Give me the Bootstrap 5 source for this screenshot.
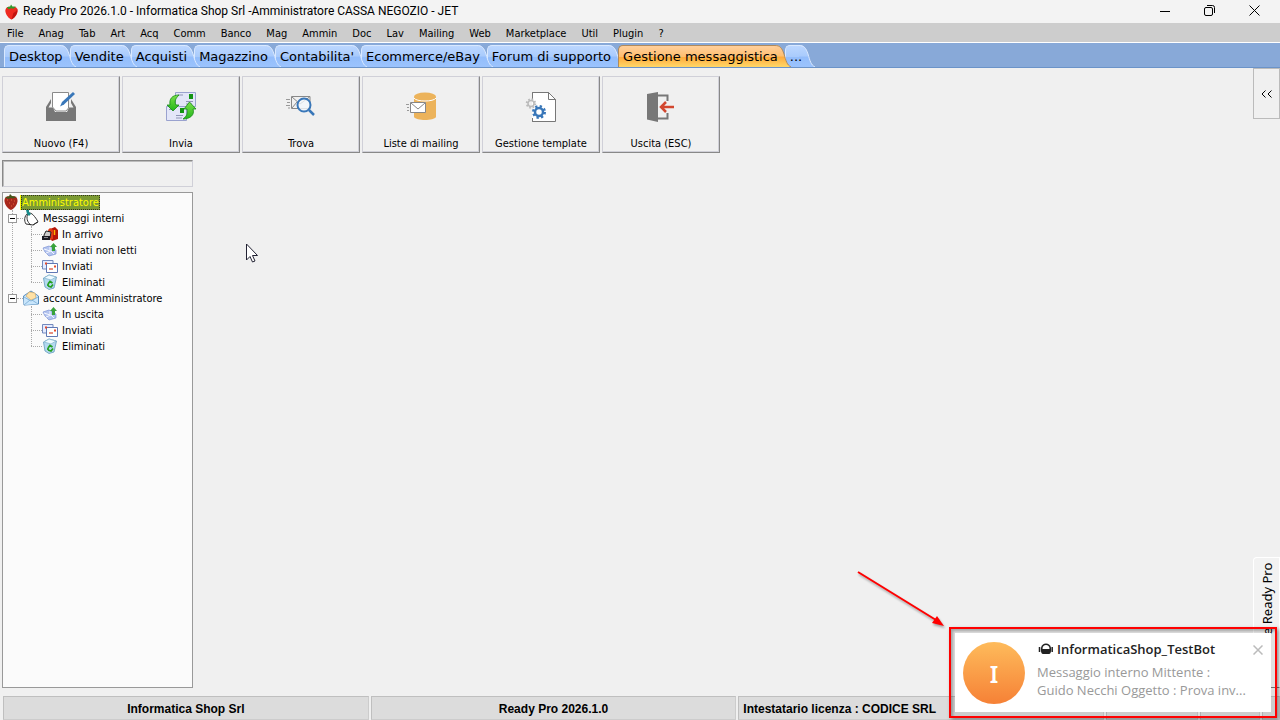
<!DOCTYPE html>
<html lang="it">
<head>
<meta charset="utf-8">
<meta name="viewport" content="width=device-width, initial-scale=1">
<title>Ready Pro 2026.1.0</title>
<link href="https://cdn.jsdelivr.net/npm/bootstrap@5.3.0/dist/css/bootstrap.min.css" rel="stylesheet">
<style>
:root { --ui: "DejaVu Sans Condensed", "DejaVu Sans", sans-serif; --humanist: "Open Sans", "Noto Sans", sans-serif; }
body { background: #f0f0f0; color: #000; font: 11px/16px var(--ui); }
button, input { font: inherit; color: inherit; border-radius: 0; }
svg { display: block; flex: none; }

.title-bar { height: 23px; padding-right: 3px; background: #f3f3f3; font: 12px/23px Roboto, "Noto Sans", sans-serif; }
.title-bar .win-btn { width: 45px; height: 21px; background: none; border: 0; display: grid; place-items: center; }
.menu-bar { height: 20px; padding-left: 7px; gap: 15px; background: #cdcdcd; border-bottom: 1px solid #fff; line-height: 21px; }
.menu-bar a { color: #000; text-decoration: none; }

.tab-strip { height: 25px; padding: 2px 0 0 4px; background: #88a9d8; border-bottom: 1px solid #6b93c8; isolation: isolate; }
.tab-btn { position: relative; z-index: var(--z); height: 22px; padding: 0 7px 0 5px; border: 0; background: none; font: 13px/24px "DejaVu Sans", sans-serif; white-space: nowrap; }
.tab-btn::before { content: ""; position: absolute; inset: 0 10px 0 0; z-index: -1; border: solid #d8e8ff; border-width: 1px 0 0 1px; border-radius: 5px 0 0 0; background: linear-gradient(#bcd7ff, #a9cbfc 50%, #93bdfb 55%, #9bc3fd); }
.tab-btn svg { position: absolute; top: 0; right: -6px; z-index: -1; }
.tab-btn.current::before { border-color: #b08a5c; background: linear-gradient(#ffcf9c, #ffbf70 50%, #ffab3c 55%, #ffd768); }

.tool-row { padding: 8px 0 7px 2px; gap: 2px; }
.tool-btn { width: 118px; height: 77px; padding: 13px 0 0; background: #f0f0f0; border: 1px solid; border-color: #d0d0d8 #888 #888 #d0d0d8; box-shadow: inset -1px -1px #d0d0d8; display: flex; flex-direction: column; align-items: center; }
.tool-btn span { margin-top: 12px; line-height: 16px; }
.side-pane { width: 191px; margin-left: 2px; gap: 5px; }
.find-box { height: 27px; width: 100%; background: #f0f0f0; border: 1px solid; border-color: #888 #d0d0d8 #d0d0d8 #888; box-shadow: inset 1px 1px #bbb; }
.tree-box { background: #fbfbfb; border: 1px solid #999; padding-top: 1px; }
.tree-box ul { list-style: none; margin: 0; padding: 0; }
.tree-row { height: 16px; display: flex; align-items: center; white-space: nowrap; }
.tree-row a { color: #000; text-decoration: none; padding: 0 2px; line-height: 15px; }
.tree-row a.picked { color: #ff0; background: #7b9a33; outline: 1px dotted #332; outline-offset: -1px; margin-left: 2px; padding: 0 1px; box-shadow: -1px 0 #ff0; }
.tree-row svg { width: 16px; height: 16px; }
.branch { position: relative; }
.branch::before { content: ""; position: absolute; left: 9px; top: 0; bottom: 56px; border-left: 1px dotted #aaa; }
.branch > li > .tree-row { padding-left: 5px; }
.branch > li > .tree-row a { padding-left: 4px; }
.fold-btn { position: relative; width: 9px; height: 9px; padding: 0; border: 1px solid #999; background: #fff; }
.fold-btn::after { content: ""; position: absolute; left: 1px; top: 3px; width: 5px; height: 1px; background: #000; }
.twig { width: 6px; border-top: 1px dotted #aaa; }
.tree-box .leafs { margin-left: 28px; position: relative; }
.leafs::before { content: ""; position: absolute; left: 0; top: 0; bottom: 8px; border-left: 1px dotted #aaa; }
.leafs .twig { width: 11px; }
.leafs .tree-row a { padding-left: 4px; }

.rail { width: 27px; }
.rail-toggle { height: 51px; width: 27px; padding: 0; background: #f0f0f0; border: 1px solid #bbb; display: grid; place-items: center; }
.rail-tab { width: 27px; height: 131px; padding: 0; background: #f2f2f2; border: 1px solid #fff; border-bottom-color: #777; border-radius: 4px 0 0 0; writing-mode: vertical-rl; font: 13px/20px "Noto Sans", sans-serif; }
.rail-tab span { display: block; transform: rotate(180deg); padding: 5px 0; height: 100%; text-align: right; }

.status-row { display: grid; grid-template-columns: 1fr 1fr 1fr 92px 60px 18px; gap: 2px; padding-left: 3px; height: 24px; font: bold 12px/24px "Liberation Sans", Arial, sans-serif; }
.status-row > div { background: #dcdcdc; border: 1px solid #bfbfbf; border-bottom-color: #ccc; border-right-color: #ccc; text-align: center; white-space: nowrap; overflow: hidden; }

.toast-frame { position: fixed; right: 3px; bottom: 2px; width: 328px; height: 91px; border: 2px solid #f00; padding: 4px; background: #00000012; box-shadow: 2px 2px 4px #0006, inset 2px 2px 3px #0004; z-index: 5; }
.toast-body-box { height: 100%; background: #fff; padding: 9px 8px; font: 13px/18px var(--humanist); color: #999; }
.avatar { width: 62px; height: 62px; border-radius: 50%; background: linear-gradient(#febb5b, #f68136); color: #fff; font: 600 23px/64px "Noto Sans", sans-serif; text-align: center; }
.toast-title { color: #222; font-weight: 600; line-height: 14px; margin-bottom: 7px; }
.toast-x { border: 0; background: none; padding: 3px 0 0; height: 13px; }
.pointer-mark { position: fixed; left: 246px; top: 243px; }
.arrow-mark { position: fixed; right: 328px; bottom: 86px; z-index: 4; filter: drop-shadow(1px 2px 1px #0005); }
</style>
</head>
<body class="d-flex flex-column min-vh-100 overflow-hidden">

<svg width="0" height="0" class="position-absolute" aria-hidden="true">
  <defs>
    <linearGradient id="gBlue" x2="0" y2="1"><stop stop-color="#bcd7ff"/><stop offset=".5" stop-color="#a9cbfc"/><stop offset=".55" stop-color="#93bdfb"/><stop offset="1" stop-color="#9bc3fd"/></linearGradient>
    <linearGradient id="gOrange" x2="0" y2="1"><stop stop-color="#ffcf9c"/><stop offset=".5" stop-color="#ffbf70"/><stop offset=".55" stop-color="#ffab3c"/><stop offset="1" stop-color="#ffd768"/></linearGradient>
    <linearGradient id="gGreen" x2="0" y2="1"><stop stop-color="#7be04a"/><stop offset="1" stop-color="#22b51c"/></linearGradient>
    <symbol id="cap" viewBox="0 0 16 22"><path d="M0 0C5 0 7 3 9 9C11 16 12 20 16 22H0Z" fill="url(#gBlue)"/><path d="M0 .5C5 .5 7 3 9 9C11 16 12 20 16 22" fill="none" stroke="#dceaff"/></symbol>
    <symbol id="capOn" viewBox="0 0 16 22"><path d="M0 0C5 0 7 3 9 9C11 16 12 20 16 22H0Z" fill="url(#gOrange)"/><path d="M0 .5C5 .5 7 3 9 9C11 16 12 20 16 22" fill="none" stroke="#b08a5c"/></symbol>
    <symbol id="berry" viewBox="0 0 16 16"><path d="M8 3C4 1 1 4 1.500 7.500C2 11 5 15 8 16C11 15 14 11 14.500 7.500C15 4 12 1 8 3Z" fill="#ee2a20"/><path d="M10 9c3-1 4-3 4-5c1 4-1 9-6 12z" fill="#c01410"/><path d="M3 3L6.500 2L7.500 0L9 2L13 2.500L10 4.500L8 4L5 5Z" fill="#2f9a2b"/></symbol>
    <symbol id="berryDark" viewBox="0 0 16 16"><path d="M8 3C4 1 1 4 1.500 7.500C2 11 5 15 8 16C11 15 14 11 14.500 7.500C15 4 12 1 8 3Z" fill="#a8281c"/><path d="M4 6h1M8 6h1M11 7h1M6 9h1M10 10h1M8 12h1" stroke="#e5603a"/><path d="M2 3L6 2.500L7 0L9 2L14 3L10 4.500L8 4L5 5Z" fill="#44581c"/></symbol>
    <symbol id="note" viewBox="0 0 16 16"><path d="M5 3C9 2 12 7 15 11.500L10 15L3 14C1 11 1 6 5 3Z" fill="#fff" stroke="#333"/><path d="M5 3C3 8 4 12 8 15M10 15L15 12" stroke="#333" fill="none"/><path d="M3 0H6V2L8 4L6 6L4 4Z" fill="#168a8a"/></symbol>
    <symbol id="inbox" viewBox="0 0 16 16"><path d="M8 3L13 1L16 4V13L10 15L8 12Z" fill="#b61508"/><path d="M12.500 4V9" stroke="#ffb400" stroke-width="1.500"/><path d="M6 4l2-2 3 2v9l-3 1z" fill="#e23a17"/><path d="M2 9L4 5L9 6L8 12L2 13Z" fill="#ccc" stroke="#222"/><path d="M0 10H8V14H0Z" fill="#1b1b22"/><path d="M2 11.500H6" stroke="#8a8a90"/></symbol>
    <symbol id="outbox" viewBox="0 0 16 16"><path d="M1 6L7 4L14 8L14 12L7 14L3 10Z" fill="#b4c4ef" stroke="#7d93d4" stroke-width=".7"/><path d="M2 7L8 9L8 5M4 11L9 9L12 12" fill="none" stroke="#f4f7ff"/><path d="M10 9V5H8L11.500 1L15 5H13V9Z" fill="#39a23b"/></symbol>
    <symbol id="sent" viewBox="0 0 16 16"><path d="M.5 2.500H11V11H.5Z" fill="#e4ebff" stroke="#7389bd"/><path d="M4.500 5.500H15.500V14.500H4.500Z" fill="#fff" stroke="#6078b4"/><path d="M3 5.500H5M12 8.500H14" stroke="#e54b2b" stroke-width="2"/><path d="M7 11H11" stroke="#df6a55" stroke-width="1.500"/></symbol>
    <symbol id="bin" viewBox="0 0 16 16"><path d="M1.500 4L7 1L14.500 3L12 14L7 15.500L3 13Z" fill="#b4d9ef" stroke="#629abc" stroke-width=".8"/><path d="M2 4L9 6L14 3L7 1Z" fill="#eefaff" stroke="#8bb8d0" stroke-width=".8"/><path d="M6 10L8 7.500L10.500 9M11 10.500L9 13L6 12M6 12V10" stroke="#25a020" stroke-width="1.800" fill="none"/></symbol>
    <symbol id="openMail" viewBox="0 0 16 16"><path d="M.5 6L8 1L15.500 6V14L1 15Z" fill="#c8e5fb" stroke="#5b8fbd"/><path d="M3 6L6 2L12 3L13 8L8 10Z" fill="#ffe1a5" stroke="#d0a45c" stroke-width=".6"/><path d="M1 7L8 11L15 7V14L1 15Z" fill="#c8e5fb"/><path d="M1 7L8 11L15 7M1 15L7 10M15 14L9 10" fill="none" stroke="#76a9d2" stroke-width=".8"/></symbol>
  </defs>
</svg>

<header>
  <div class="title-bar d-flex">
    <svg class="mt-1 ms-1 me-1" width="15" height="16"><use href="#berry"/></svg>
    <span class="flex-grow-1 text-nowrap">Ready Pro 2026.1.0 - Informatica Shop Srl -Amministratore CASSA NEGOZIO - JET</span>
    <button class="win-btn" aria-label="Riduci"><svg width="10" height="10"><path d="M0 5.500H10" stroke="#000"/></svg></button>
    <button class="win-btn" aria-label="Ripristina"><svg width="11" height="11" fill="none" stroke="#000"><rect x=".5" y="2.500" width="8" height="8" rx="1.500"/><path d="M3 .5H8.500A2 2 0 0 1 10.500 2.500V8"/></svg></button>
    <button class="win-btn" aria-label="Chiudi"><svg width="11" height="11"><path d="M.5 .5L10.500 10.500M10.500 .5L.5 10.500" stroke="#000"/></svg></button>
  </div>
  <nav class="menu-bar d-flex" aria-label="Menu">
    <a href="#">File</a><a href="#">Anag</a><a href="#">Tab</a><a href="#">Art</a><a href="#">Acq</a><a href="#">Comm</a><a href="#">Banco</a><a href="#">Mag</a><a href="#">Ammin</a><a href="#">Doc</a><a href="#">Lav</a><a href="#">Mailing</a><a href="#">Web</a><a href="#">Marketplace</a><a href="#">Util</a><a href="#">Plugin</a><a href="#">?</a>
  </nav>
  <div class="tab-strip d-flex">
    <button class="tab-btn" style="--z:8">Desktop<svg width="16" height="22"><use href="#cap"/></svg></button>
    <button class="tab-btn" style="--z:7">Vendite<svg width="16" height="22"><use href="#cap"/></svg></button>
    <button class="tab-btn" style="--z:6">Acquisti<svg width="16" height="22"><use href="#cap"/></svg></button>
    <button class="tab-btn" style="--z:5">Magazzino<svg width="16" height="22"><use href="#cap"/></svg></button>
    <button class="tab-btn" style="--z:4">Contabilita'<svg width="16" height="22"><use href="#cap"/></svg></button>
    <button class="tab-btn" style="--z:3">Ecommerce/eBay<svg width="16" height="22"><use href="#cap"/></svg></button>
    <button class="tab-btn" style="--z:2">Forum di supporto<svg width="16" height="22"><use href="#cap"/></svg></button>
    <button class="tab-btn current" style="--z:9">Gestione messaggistica<svg width="16" height="22"><use href="#capOn"/></svg></button>
    <button class="tab-btn" style="--z:1">...<svg width="16" height="22"><use href="#cap"/></svg></button>
  </div>
</header>

<main class="d-flex flex-grow-1">
  <div class="d-flex flex-column flex-grow-1">
    <div class="tool-row d-flex">
      <button class="tool-btn"><svg width="34" height="34"><path d="M2 17L7 9V13L4.500 17.500H9L11 22H23L25 17.500H29.500L27 13V9L32 17V31H2Z" fill="#777"/><path d="M8.500 2.500H24.500V18L22 21H12L8.500 17Z" fill="#fff" stroke="#8a8a8a"/><path d="M16 16.500L18 12L29 2L31 4L20 14.500Z" fill="#3977b9"/></svg><span>Nuovo (F4)</span></button>
      <button class="tool-btn"><svg width="34" height="34"><path d="M11.500 2.500H31.500V16.500H11.500Z" fill="#e3e6f8" stroke="#9aa2cf"/><path d="M2.500 16.500H22.500V30.500H2.500Z" fill="#e3e6f8" stroke="#9aa2cf"/><path d="M25 4h4v5h-4zM16 18h4v5h-4z" fill="#139413"/><path d="M14 5h5M22 11.500h7M22 14h6M5 19.500h4M12 25.500h7M12 28h6" stroke="#8f96b5"/><path d="M15 5C8 5 5 9 6 15H3L9 21L15 15H12C10 11 12 8 15 5Z" fill="url(#gGreen)" stroke="#178a14" stroke-width=".8"/><path d="M19 29C26 29 31 25 29 19H32L25.500 12L20 19H23C24 23 23 26 19 29Z" fill="url(#gGreen)" stroke="#178a14" stroke-width=".8"/></svg><span>Invia</span></button>
      <button class="tool-btn"><svg width="34" height="34" fill="none"><path d="M7.500 6.500H26V18.500H7.500ZM8 7L16 14L25.500 7M8 18L13 12" stroke="#888"/><path d="M2 9.500H6M3 12.500H6M2 15.500H6M4 18H6" stroke="#999"/><circle cx="20" cy="15" r="6.500" fill="#f4f8fc" fill-opacity=".8" stroke="#3977b9" stroke-width="2"/><path d="M25 20L30 25" stroke="#3977b9" stroke-width="2.500"/></svg><span>Trova</span></button>
      <button class="tool-btn"><svg width="34" height="34" fill="none"><path d="M10 7V27C12 31 30 31 32 27V7Z" fill="#ecb35b"/><ellipse cx="21" cy="6.500" rx="11" ry="4" fill="#ecb35b"/><path d="M10 8C12 12 30 12 32 8" stroke="#fff"/><path d="M6.500 12.500H21.500V22.500H6.500Z" fill="#fff" stroke="#888"/><path d="M7 13L14 19L21 13" stroke="#888"/><path d="M2 14.500H5M3 17.500H5M3 20.500H5" stroke="#999"/></svg><span>Liste di mailing</span></button>
      <button class="tool-btn"><svg width="34" height="34" fill="none"><path d="M8.500 10V2.500H24.500L31.500 9.500V31.500H8.500V28" fill="#fff" stroke="#777"/><path d="M8 3H12V28H8Z" fill="#fff"/><path d="M8.500 9V2.500H24.500V9.500H31.500L24.500 2.500M8.500 28V31.500H31" stroke="#777"/><circle cx="7" cy="13.500" r="4" stroke="#bbb" stroke-width="2.500" stroke-dasharray="1.570 1.570"/><circle cx="7" cy="13.500" r="3" stroke="#bbb" stroke-width="1.500"/><circle cx="15" cy="22" r="5.500" stroke="#3977b9" stroke-width="3" stroke-dasharray="2.160 2.160"/><circle cx="15" cy="22" r="4" fill="#fff" stroke="#3977b9" stroke-width="2.500"/></svg><span>Gestione template</span></button>
      <button class="tool-btn"><svg width="34" height="34" fill="none"><path d="M3 4L14 2V32L3 29.500Z" fill="#777"/><path d="M14 5.500H23.500V11M23.500 23V28.500H14" stroke="#777" stroke-width="2"/><path d="M17 17H30M22 12L17 17L22 22" stroke="#d2472f" stroke-width="2.500"/></svg><span>Uscita (ESC)</span></button>
    </div>
    <div class="side-pane d-flex flex-column flex-grow-1">
      <input class="find-box" type="text" aria-label="Cerca">
      <nav class="tree-box flex-grow-1" aria-label="Cartelle">
        <div class="tree-row"><svg><use href="#berryDark"/></svg><a class="picked" href="#">Amministratore</a></div>
        <ul class="branch">
          <li>
            <div class="tree-row"><button class="fold-btn" aria-label="Comprimi Messaggi interni"></button><i class="twig"></i><svg><use href="#note"/></svg><a href="#">Messaggi interni</a></div>
            <ul class="leafs">
              <li class="tree-row"><i class="twig"></i><svg><use href="#inbox"/></svg><a href="#">In arrivo</a></li>
              <li class="tree-row"><i class="twig"></i><svg><use href="#outbox"/></svg><a href="#">Inviati non letti</a></li>
              <li class="tree-row"><i class="twig"></i><svg><use href="#sent"/></svg><a href="#">Inviati</a></li>
              <li class="tree-row"><i class="twig"></i><svg><use href="#bin"/></svg><a href="#">Eliminati</a></li>
            </ul>
          </li>
          <li>
            <div class="tree-row"><button class="fold-btn" aria-label="Comprimi account Amministratore"></button><i class="twig"></i><svg><use href="#openMail"/></svg><a href="#">account Amministratore</a></div>
            <ul class="leafs">
              <li class="tree-row"><i class="twig"></i><svg><use href="#outbox"/></svg><a href="#">In uscita</a></li>
              <li class="tree-row"><i class="twig"></i><svg><use href="#sent"/></svg><a href="#">Inviati</a></li>
              <li class="tree-row"><i class="twig"></i><svg><use href="#bin"/></svg><a href="#">Eliminati</a></li>
            </ul>
          </li>
        </ul>
      </nav>
    </div>
  </div>
  <aside class="rail d-flex flex-column justify-content-between">
    <button class="rail-toggle" aria-label="Espandi pannello"><svg width="11" height="8" fill="none" stroke="#000"><path d="M4.500 .5L1 4L4.500 7.500M10.500 .5L7 4L10.500 7.500"/></svg></button>
    <button class="rail-tab"><span>e Ready Pro</span></button>
  </aside>
</main>

<footer class="status-row mt-2">
  <div>Informatica Shop Srl</div><div>Ready Pro 2026.1.0</div><div class="text-start ps-1">Intestatario licenza : CODICE SRL</div><div></div><div></div><div></div>
</footer>

<svg class="pointer-mark" width="12" height="20" aria-hidden="true"><path d="M.5 1V17L4 13.500L6.500 19L9 18L6.500 12.500H11.500Z" fill="#fff" stroke="#223"/></svg>
<svg class="arrow-mark" width="96" height="64" aria-hidden="true"><path d="M2 2L80 50" stroke="#f00" stroke-width="2"/><path d="M88 56L81 46L76 53Z" fill="#f00"/></svg>

<section class="toast-frame" role="alert">
  <div class="toast-body-box d-flex align-items-start">
    <div class="avatar flex-shrink-0">I</div>
    <div class="ms-2 ps-1 flex-grow-1 text-nowrap">
      <div class="toast-title d-flex align-items-center"><svg class="me-1" width="16" height="14"><path d="M4.500 11C3 7 4 1.500 9 1.500C14 1.500 15 7 13.500 11Q13 12 12 12H6Q5 12 4.500 11Z" fill="#222"/><path d="M5.500 7C5.500 4 7 3 9 3C11 3 12.500 4 12.500 7Z" fill="#fff"/><path d="M2.500 5V10M15.200 5V10" stroke="#222" stroke-width="1.500"/></svg>InformaticaShop_TestBot</div>
      <div>Messaggio interno Mittente :</div>
      <div>Guido Necchi Oggetto : Prova inv...</div>
    </div>
    <button class="toast-x" aria-label="Chiudi notifica"><svg width="10" height="10"><path d="M.5 .5L9.500 9.500M9.500 .5L.5 9.500" stroke="#bbb" stroke-width="1.500"/></svg></button>
  </div>
</section>

<script src="https://cdn.jsdelivr.net/npm/bootstrap@5.3.0/dist/js/bootstrap.bundle.min.js"></script>
</body>
</html>
